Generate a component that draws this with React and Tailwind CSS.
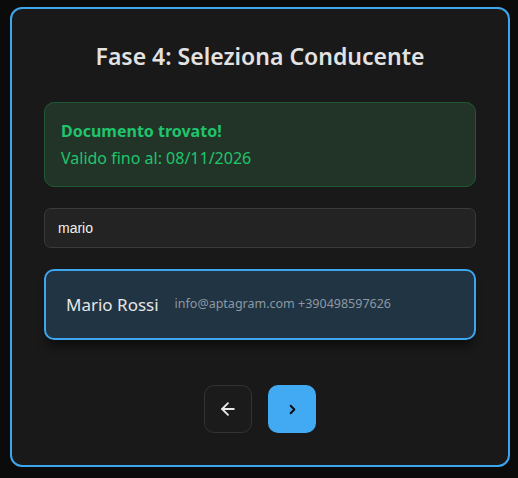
import React from "react";

export default function App() {
  return (
    <div className="w-[518px] h-[478px] bg-[#0b0b0b] pt-[7px] px-[10px]" style={{ fontFamily: '"Noto Sans", "Open Sans", sans-serif' }}>
      <div className="w-[500px] h-[460px] rounded-[12px] border-2 border-[#3ea6ee] bg-[#191919] px-[32px] pt-[31px]">
        <h1 className="text-center text-[23px] leading-[32px] font-semibold text-[#e2e2e2]">Fase 4: Seleziona Conducente</h1>
        <div className="mt-[30px] h-[85px] rounded-[10px] border border-[#1f5a37] bg-[#223428] px-[16px] pt-[16px]">
          <div className="text-[16px] leading-[24px] font-bold text-[#1fc46c]">Documento trovato!</div>
          <div className="mt-[3px] text-[16px] leading-[24px] text-[#1fc46c]">Valido fino al: 08/11/2026</div>
        </div>
        <div className="mt-[21px] h-[40px] rounded-[7px] border border-[#3a3a3a] bg-[#232323] flex items-center px-[13px]">
          <span className="text-[14px] text-[#f0f0f0]" style={{ fontFamily: '"Liberation Sans", Arial, sans-serif' }}>mario</span>
        </div>
        <div className="mt-[21px] h-[71px] rounded-[10px] border-2 border-[#3ea6ee] bg-[#203443] flex items-center px-[20px] gap-[16px] shadow-[0_9px_10px_-3px_rgba(0,0,0,0.5)]">
          <span className="text-[17px] text-[#e6e6e6]">Mario Rossi</span>
          <span className="text-[12.5px] text-[#8d98a2]">info@aptagram.com +390498597626</span>
        </div>
        <div className="mt-[45px] flex justify-center gap-[16px]">
          <button className="w-[48px] h-[48px] rounded-[10px] border border-[#333] bg-[#1b1b1b] flex items-center justify-center">
            <svg width="20" height="20" viewBox="0 0 24 24" fill="none" stroke="#e8e8e8" strokeWidth="2.2" strokeLinecap="round" strokeLinejoin="round">
              <path d="M19 12H5" />
              <path d="M12 19l-7-7 7-7" />
            </svg>
          </button>
          <button className="w-[48px] h-[48px] rounded-[10px] bg-[#42aaf2] flex items-center justify-center">
            <svg width="15" height="15" viewBox="0 0 24 24" fill="none" stroke="#0a0a0a" strokeWidth="3" strokeLinecap="round" strokeLinejoin="round">
              <path d="M9 6l6 6-6 6" />
            </svg>
          </button>
        </div>
      </div>
    </div>
  );
}
